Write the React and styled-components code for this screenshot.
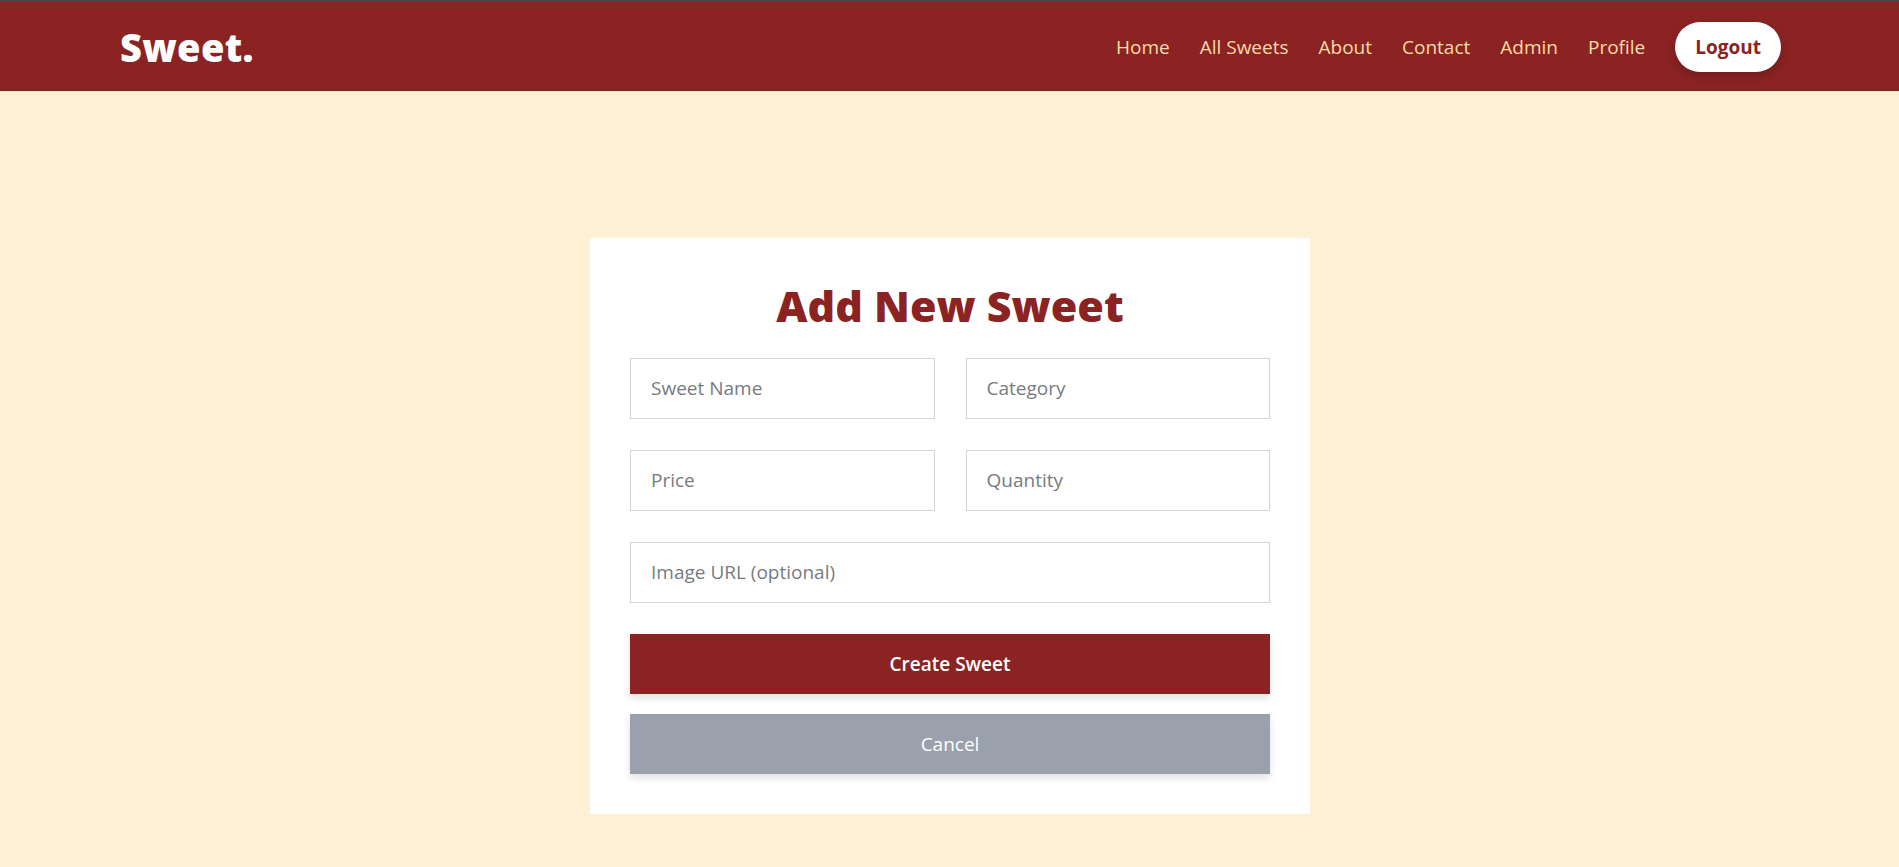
import React from 'react';
import styled, { createGlobalStyle } from 'styled-components';

const GlobalStyle = createGlobalStyle`
  body {
    margin: 0;
    background: #fef0d5;
    font-family: 'Open Sans', 'Noto Sans', sans-serif;
  }
`;

function App() {
  return (
    <>
      <GlobalStyle />
      <Nav>
        <Logo>Sweet.</Logo>
        <NavLinks>
          <NavLink>Home</NavLink>
          <NavLink>All Sweets</NavLink>
          <NavLink>About</NavLink>
          <NavLink>Contact</NavLink>
          <NavLink>Admin</NavLink>
          <NavLink>Profile</NavLink>
          <LogoutButton>Logout</LogoutButton>
        </NavLinks>
      </Nav>

      <Main>
        <Card>
          <Title>Add New Sweet</Title>
          <Form onSubmit={(e) => e.preventDefault()}>
            <Input placeholder="Sweet Name" />
            <Input placeholder="Category" />
            <Input placeholder="Price" />
            <Input placeholder="Quantity" />
            <Input placeholder="Image URL (optional)" wide />
            <Actions>
              <Button type="submit" primary>Create Sweet</Button>
              <Button type="button">Cancel</Button>
            </Actions>
          </Form>
        </Card>
      </Main>
    </>
  );
}

export const Nav = styled.nav`
  display: flex;
  align-items: center;
  justify-content: space-between;
  height: 89px;
  padding: 0 118px;
  background: #8b2323;
  border-top: 2px solid #474747;
`

export const Logo = styled.div`
  color: #ffffff;
  font-size: 38px;
  font-weight: 800;
  letter-spacing: 0.3px;
  margin-left: 2px;
`

export const NavLinks = styled.div`
  display: flex;
  align-items: center;
  gap: 30px;
`

export const NavLink = styled.a`
  color: #fdd9a8;
  font-size: 19px;
  cursor: pointer;
`

export const LogoutButton = styled.button`
  height: 50px;
  padding: 0 20px;
  border: none;
  border-radius: 25px;
  background: #ffffff;
  color: #8b2323;
  font-family: 'Open Sans', sans-serif;
  font-size: 19px;
  font-weight: 700;
  box-shadow: 0 4px 8px rgba(0, 0, 0, 0.2);
  cursor: pointer;
`

export const Main = styled.main`
  display: flex;
  justify-content: center;
  padding-top: 147px;
`

export const Card = styled.div`
  width: 720px;
  box-sizing: border-box;
  padding: 42px 40px 40px;
  background: #ffffff;
  margin-left: 1px;
`

export const Title = styled.h1`
  margin: 0 0 26px;
  text-align: center;
  color: #8b2323;
  font-size: 43px;
  font-weight: 800;
  line-height: 1.2;
`

export const Form = styled.form`
  display: grid;
  grid-template-columns: 1fr 1fr;
  gap: 31px;
`

export const Input = styled.input`
  grid-column: ${(p) => (p.wide ? '1 / -1' : 'auto')};
  height: 61px;
  box-sizing: border-box;
  padding: 0 20px;
  border: 1px solid #d1d5db;
  border-radius: 0;
  font-family: 'Open Sans', sans-serif;
  font-size: 19px;
  color: #333;
  outline: none;

  &::placeholder {
    color: #777b80;
  }
`

export const Actions = styled.div`
  grid-column: 1 / -1;
  display: flex;
  flex-direction: column;
  gap: 20px;
`

export const Button = styled.button`
  height: 60px;
  border: none;
  background: ${(p) => (p.primary ? '#8b2323' : '#9aa1ad')};
  color: #ffffff;
  font-family: 'Open Sans', sans-serif;
  font-size: 19px;
  font-weight: ${(p) => (p.primary ? 600 : 400)};
  box-shadow: 0 4px 8px rgba(0, 0, 0, 0.12);
  cursor: pointer;
`

export default App;
